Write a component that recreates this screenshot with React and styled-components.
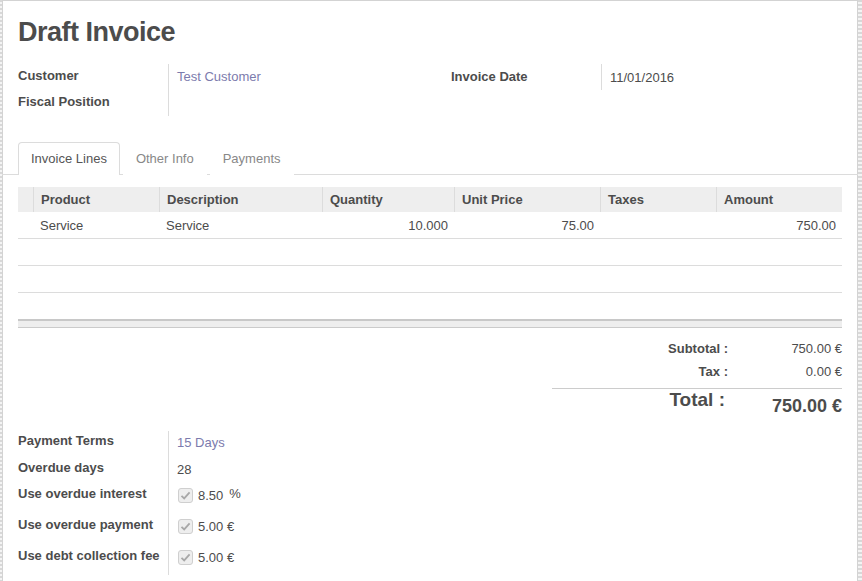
import React from 'react';
import styled, { createGlobalStyle } from 'styled-components';

const GlobalStyle = createGlobalStyle`
  html, body {
    margin: 0;
    padding: 0;
  }

  body {
    background: repeating-linear-gradient(to bottom, #d8d8d8 0 2px, #f4f4f4 2px 4px);
    font-family: "Liberation Sans", Arial, sans-serif;
    font-size: 13px;
    color: #4c4c4c;
  }
`;

const Sheet = styled.div`
  box-sizing: border-box;
  width: 856px;
  min-height: 600px;
  margin-left: 2px;
  padding: 16px 15px 20px;
  border: 1px solid #d3d3d3;
  background: #fff;
`;

const Title = styled.h1`
  margin: 0 0 16px;
  font-size: 27px;
  line-height: 31px;
  letter-spacing: -0.5px;
  font-weight: bold;
  color: #4c4c4c;
`;

const GroupRow = styled.div`
  display: grid;
  grid-template-columns: 433px 1fr;
`;

const Group = styled.div`
  display: grid;
  grid-template-columns: 150px 1fr;
  grid-auto-rows: ${({ $rows }) => $rows || 'auto'};
  grid-template-rows: ${({ $rows }) => $rows || 'none'};
  align-content: start;
`;

const Label = styled.div`
  padding-top: ${({ $top }) => $top ?? 2}px;
  line-height: 20px;
  font-weight: bold;
  color: #4c4c4c;
  white-space: nowrap;
`;

const Value = styled.div`
  display: flex;
  align-items: ${({ $check }) => ($check ? 'flex-start' : 'stretch')};
  gap: 4px;
  padding: ${({ $top }) => $top ?? 3}px 0 0 8px;
  border-left: 1px solid #dcdcdc;
  line-height: 20px;
  color: ${({ $link }) => ($link ? '#7c7bad' : '#4c4c4c')};
`;

const Tabs = styled.div`
  display: flex;
  gap: 3px;
  margin: 26px -16px 0;
  padding-left: 16px;
  border-bottom: 1px solid #dcdcdc;
`;

const Tab = styled.div`
  height: 32px;
  padding: 0 12px;
  line-height: 31px;
  border: 1px solid ${({ $active }) => ($active ? '#dcdcdc' : 'transparent')};
  border-bottom: none;
  border-radius: 4px 4px 0 0;
  margin-bottom: -1px;
  background: #fff;
  color: ${({ $active }) => ($active ? '#555' : '#888')};
`;

const Lines = styled.table`
  width: 824px;
  margin-top: 12px;
  border-collapse: separate;
  border-spacing: 0;
  table-layout: fixed;
`;

const Th = styled.th`
  height: 25px;
  padding: 0 7px;
  background: #eee;
  border-left: ${({ $first }) => ($first ? 'none' : '1px solid #dcdcdc')};
  text-align: left;
  font-weight: bold;
  color: #4c4c4c;
  white-space: nowrap;
`;

const Td = styled.td`
  height: 26px;
  padding: 0 ${({ $num }) => ($num ? 6 : 7)}px 0 7px;
  border-bottom: ${({ $last }) => ($last ? 'none' : '1px solid #dcdcdc')};
  text-align: ${({ $num }) => ($num ? 'right' : 'left')};
  color: #4c4c4c;
`;

const FootCell = styled.td`
  height: 6px;
  padding: 0;
  background: #eee;
  border-top: 2px solid #c8c8c8;
  border-bottom: 1px solid #cbcbcb;
`;

const Totals = styled.div`
  display: grid;
  grid-template-columns: 176px 114px;
  width: 290px;
  margin: 9px 0 0 auto;
`;

const TotalLabel = styled.div`
  line-height: 23px;
  text-align: right;
  font-weight: bold;
`;

const TotalValue = styled.div`
  line-height: 23px;
  text-align: right;
`;

const GrandLabel = styled.div`
  margin-top: 5px;
  padding: 0 3px 0 0;
  border-top: 1px solid #ccc;
  line-height: 22px;
  text-align: right;
  font-size: 19px;
  font-weight: bold;
`;

const GrandValue = styled.div`
  margin-top: 5px;
  padding-top: 6px;
  border-top: 1px solid #ccc;
  line-height: 22px;
  text-align: right;
  font-size: 18px;
  font-weight: bold;
`;

const BottomGroup = styled(Group)`
  margin-top: 14px;
  width: 433px;
`;

const Check = styled.span`
  display: inline-flex;
  align-items: center;
  justify-content: center;
  box-sizing: border-box;
  width: 15px;
  height: 15px;
  margin: 0 1px 0 1px;
  border: 1px solid #cfcfcf;
  border-radius: 3px;
  background: #eee;
`;

const Num = styled.span`
  line-height: 15px;
`;

const Unit = styled.span`
  margin-left: 2px;
  position: relative;
  top: -2px;
  line-height: 15px;
`;

const CheckBox = () => (
  <Check>
    <svg width="11" height="11" viewBox="0 0 11 11">
      <path d="M1.5 5.8 L4.2 8.4 L9.6 2.4" fill="none" stroke="#a8a8a8" strokeWidth="1.8" />
    </svg>
  </Check>
);

const columns = [
  { key: 'h', label: '', width: 15 },
  { key: 'product', label: 'Product', width: 126 },
  { key: 'desc', label: 'Description', width: 163 },
  { key: 'qty', label: 'Quantity', width: 132, num: true },
  { key: 'price', label: 'Unit Price', width: 146, num: true },
  { key: 'taxes', label: 'Taxes', width: 116 },
  { key: 'amount', label: 'Amount', width: 126, num: true },
];

const rows = [
  { h: '', product: 'Service', desc: 'Service', qty: '10.000', price: '75.00', taxes: '', amount: '750.00' },
  null,
  null,
  null,
];

const App = () => (
  <>
    <GlobalStyle />
    <Sheet>
      <Title>Draft Invoice</Title>

      <GroupRow>
        <Group $rows="26px 26px">
          <Label>Customer</Label>
          <Value $link>Test Customer</Value>
          <Label>Fiscal Position</Label>
          <Value />
        </Group>
        <Group $rows="26px">
          <Label $top={3}>Invoice Date</Label>
          <Value $top={4}>11/01/2016</Value>
        </Group>
      </GroupRow>

      <Tabs>
        <Tab $active>Invoice Lines</Tab>
        <Tab>Other Info</Tab>
        <Tab>Payments</Tab>
      </Tabs>

      <Lines>
        <colgroup>
          {columns.map(c => (
            <col key={c.key} style={{ width: c.width }} />
          ))}
        </colgroup>
        <thead>
          <tr>
            {columns.map((c, i) => (
              <Th key={c.key} $first={i === 0}>
                {c.label}
              </Th>
            ))}
          </tr>
        </thead>
        <tbody>
          {rows.map((r, i) => (
            <tr key={i}>
              {columns.map(c => (
                <Td key={c.key} $num={c.num} $last={i === rows.length - 1}>
                  {r ? r[c.key] : ''}
                </Td>
              ))}
            </tr>
          ))}
        </tbody>
        <tfoot>
          <tr>
            <FootCell colSpan={columns.length} />
          </tr>
        </tfoot>
      </Lines>

      <Totals>
        <TotalLabel>Subtotal :</TotalLabel>
        <TotalValue>750.00 €</TotalValue>
        <TotalLabel>Tax :</TotalLabel>
        <TotalValue>0.00 €</TotalValue>
        <GrandLabel>Total :</GrandLabel>
        <GrandValue>750.00 €</GrandValue>
      </Totals>

      <BottomGroup $rows="27px 26px 31px 31px 29px">
        <Label $top={0}>Payment Terms</Label>
        <Value $link $top={2}>15 Days</Value>
        <Label $top={0}>Overdue days</Label>
        <Value $top={2}>28</Value>
        <Label $top={0}>Use overdue interest</Label>
        <Value $check $top={4}>
          <CheckBox />
          <Num>8.50</Num>
          <Unit>%</Unit>
        </Value>
        <Label $top={0}>Use overdue payment</Label>
        <Value $check $top={4}>
          <CheckBox />
          <Num>5.00 €</Num>
        </Value>
        <Label $top={0}>Use debt collection fee</Label>
        <Value $check $top={4}>
          <CheckBox />
          <Num>5.00 €</Num>
        </Value>
      </BottomGroup>
    </Sheet>
  </>
);

export default App;
